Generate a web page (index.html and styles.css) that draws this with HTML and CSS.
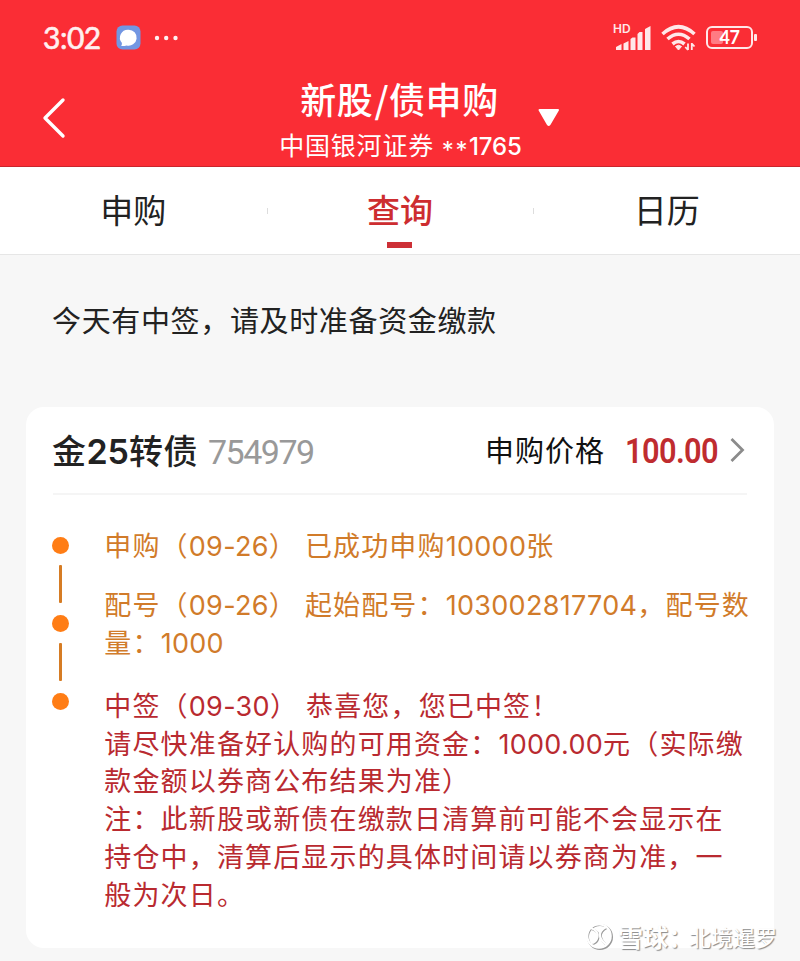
FILE: index.html
```
<!DOCTYPE html>
<html lang="zh-CN">
<head>
<meta charset="utf-8">
<title>新股/债申购</title>
<link rel="stylesheet" href="styles.css">
</head>
<body>
<header class="header">
  <div class="status">
    <div class="status-left">
      <span class="clock">3:02</span>
      <svg class="chat" viewBox="0 0 25 25"><rect x=".5" y=".5" width="24" height="24" rx="6" fill="#7296e2"/><path d="M12.5 4.7a8 8 0 1 1-2 15.7c-2 .7-3.600.6-5.300.5.8-1.100.8-2 .6-3.100A8 8 0 0 1 12.500 4.700z" fill="#fff"/></svg>
      <svg class="dots" viewBox="0 0 25 6"><g fill="#fff0f0"><circle cx="3" cy="3" r="2.200"/><circle cx="12.200" cy="3" r="2.200"/><circle cx="21.500" cy="3" r="2.200"/></g></svg>
    </div>
    <div class="status-right">
      <div class="signal"><span class="hd">HD</span>
        <svg viewBox="0 0 38 26"><g fill="#ffe8e9"><path d="M1 25v-3l5.500-3V25zM8.500 25v-6.500l5-2.500V25z"/><path d="M15.500 25V14l2-1.500h3V25z"/><path d="M22.500 25V9l2-2h3V25zM30 25V4l5.500-3v24z"/></g></svg>
      </div>
      <svg class="wifi" viewBox="0 0 36 28"><g fill="none" stroke="#ffe8e9" stroke-width="3.600"><path d="M1.500 10q16-14.500 32 0"/><path d="M6.500 15q11-9.500 22 0"/><path d="M11.500 20q6-5 12 0"/></g><path d="M14.500 22.500q3-2.500 6 0L17.500 26z" fill="#ffe8e9" stroke="#ffe8e9"/><path d="M27 26v-6.500M27 26l-2.700-3M30.800 26v-7M30.800 19.500l2.700 3" stroke="#ffe8e9" stroke-width="1.800" fill="none"/></svg>
      <div class="battery"><span class="level"></span><span class="pct">47</span></div>
    </div>
  </div>
  <div class="nav">
    <svg class="back" viewBox="0 0 24 42"><path d="M21 3 3 21l18 18" fill="none" stroke="#fff" stroke-width="3.400" stroke-linecap="round" stroke-linejoin="round"/></svg>
    <div class="heading">
      <h1>新股<i>/</i>债申购</h1>
      <p>中国银河证券 <span class="stars">**</span><span class="acct">1765</span></p>
    </div>
    <svg class="caret" viewBox="0 0 24 20"><path d="M2.500 2h18.500L12.500 16.500q-.8 1-1.600 0z" fill="#fff" stroke="#fff" stroke-width="2" stroke-linejoin="round"/></svg>
  </div>
</header>
<nav class="tabs">
  <div class="tab">申购</div>
  <div class="tab active">查询</div>
  <div class="tab">日历</div>
</nav>
<p class="notice">今天有中签，请及时准备资金缴款</p>
<section class="card">
  <div class="card-head">
    <span class="name">金<b>25</b>转债</span>
    <span class="code">754979</span>
    <span class="label">申购价格</span>
    <span class="price">100.00</span>
    <svg class="chev" viewBox="0 0 16 26"><path d="m2.500 2 11 11-11 11" fill="none" stroke="#8b8b8b" stroke-width="2.800"/></svg>
  </div>
  <div class="timeline">
    <div class="rail"><i class="dot"></i><i class="bar"></i><i class="dot"></i><i class="bar"></i><i class="dot"></i></div>
    <div class="events">
      <div class="event"><div>申购（<span class="num">09-26</span>）<span class="gap"></span>已成功申购<span class="num">10000</span>张</div></div>
      <div class="event"><div>配号（<span class="num">09-26</span>）<span class="gap"></span>起始配号：<span class="num">103002817704</span>，配号数</div><div>量：<span class="num">1000</span></div></div>
      <div class="event won"><div>中签（<span class="num">09-30</span>）<span class="gap"></span>恭喜您，您已中签！</div><div>请尽快准备好认购的可用资金：<span class="num">1000.00</span>元（实际缴</div><div>款金额以券商公布结果为准）</div><div>注：此新股或新债在缴款日清算前可能不会显示在</div><div>持仓中，清算后显示的具体时间请以券商为准，一</div><div>般为次日。</div></div>
    </div>
  </div>
</section>
<div class="watermark">
  <svg viewBox="0 0 28 28"><g fill="none" stroke="#999" stroke-width="2" transform="translate(1 1)"><circle cx="13" cy="13" r="12"/><path d="M5 5q8 3 6.500 9T5 20M20 4q-7 4-6 9t7 9"/></g><g fill="none" stroke="#fff" stroke-width="2.200"><circle cx="13" cy="13" r="11.700"/><path d="M5 5q8 3 6.500 9T5 20M20 4q-7 4-6 9t7 9"/></g></svg>
  <span class="brand">雪球：</span><span class="user">北境暹罗</span>
</div>
</body>
</html>
```

FILE: styles.css
```
* { box-sizing: border-box; margin: 0; padding: 0; }
body { width: 800px; height: 961px; overflow: hidden; background: #f7f7f7; font-family: Inter, "Noto Sans CJK SC", sans-serif; position: relative; text-spacing-trim: space-all; white-space: nowrap; }
svg { display: block; flex: none; }
i { font-style: normal; }

.header { height: 167px; background: #fa2d35; border-bottom: 1px solid #c9252c; color: #fff; }
.status { height: 75px; display: flex; justify-content: space-between; padding: 0 47px 0 43px; }
.status-left, .status-right { display: flex; align-items: center; }
.clock { width: 73px; font-family: Lato, sans-serif; font-size: 30px; letter-spacing: -.5px; color: #fff0f0; -webkit-text-stroke: .6px #fff0f0; line-height: 32px; margin-top: -2px; }
.chat { width: 25px; height: 25px; }
.dots { width: 25px; height: 6px; margin-left: 13px; }
.signal { position: relative; width: 38px; height: 26px; margin-right: 8px; }
.signal svg { width: 38px; height: 26px; }
.hd { position: absolute; left: -2px; top: -2px; font-size: 12px; line-height: 12px; font-weight: 600; color: #ffe8e9; }
.wifi { width: 36px; height: 28px; margin-right: 9px; }
.battery { position: relative; width: 47px; height: 23px; border: 2px solid #ffe8e9; border-radius: 6px; display: flex; align-items: center; justify-content: center; }
.battery::after { content: ""; position: absolute; right: -6px; top: 6px; width: 3px; height: 7px; border-radius: 1px; background: #ffe8e9; }
.level { position: absolute; left: 3px; top: 3px; width: 12px; height: 13px; background: #ff7b83; border-radius: 2px; }
.pct { position: relative; font-family: Lato, sans-serif; font-size: 18px; line-height: 19px; font-weight: 700; letter-spacing: -.5px; }

.nav { height: 91px; display: flex; align-items: flex-start; }
.back { width: 24px; height: 42px; margin: 22px 0 0 42px; }
.heading { width: 270px; margin-left: 200px; text-align: center; }
h1 { font-size: 36px; font-weight: 500; line-height: 48px; letter-spacing: .6px; font-family: "Noto Sans CJK SC", sans-serif; width: 267px; margin-top: -1px; }
h1 i { margin: 0 0 0 1px; }
.heading p { font-size: 25px; line-height: 38px; height: 38px; margin-top: 5px; letter-spacing: .8px; width: 271px; margin-left: -1px; }
.stars { letter-spacing: 1.500px; font-size: 24px; position: relative; top: 4px; }
.acct { font-size: 24px; letter-spacing: -.1px; font-weight: 500; }
.caret { width: 24px; height: 20px; margin: 33px 0 0 1px; }

.tabs { height: 88px; background: #fff; border-bottom: 1px solid #e6e6e6; display: grid; grid-template-columns: repeat(3, 1fr); }
.tab { position: relative; height: 87px; text-align: center; font-size: 33px; line-height: 89px; color: #222; }
.tab + .tab::before { content: ""; position: absolute; left: 0; top: 41px; width: 1px; height: 6px; background: #ddd; }
.active { color: #cd2d30; font-weight: 500; }
.active::after { content: ""; position: absolute; left: 120px; top: 75px; width: 25px; height: 6px; background: #cd3036; }

.notice { height: 152px; padding: 45px 0 0 52px; font-size: 29px; line-height: 44px; letter-spacing: .65px; color: #222; }

.card { margin: 0 26px; height: 541px; background: #fff; border-radius: 18px; padding: 0 27px; }
.card-head { height: 88px; border-bottom: 2px solid #f5f5f5; display: flex; align-items: center; }
.card-head > * { flex: none; }
.name { width: 156px; font-size: 34px; font-weight: 500; color: #222; letter-spacing: .4px; margin: -2px 0 0 -1px; }
.name b { font-weight: 600; font-size: 34px; letter-spacing: 0; }
.code { font: 400 34px/44px Roboto, sans-serif; letter-spacing: -1.500px; color: #999; width: 277px; padding-top: 3px; }
.label { font-size: 29px; letter-spacing: 1px; color: #111; width: 140px; margin-top: -2px; }
.price { font: 600 35px/44px Roboto, sans-serif; letter-spacing: -.7px; color: #bf2c2f; width: 104px; padding-top: 4px; transform: scaleX(.88); transform-origin: 0 50%; }
.chev { width: 16px; height: 26px; }

.timeline { display: flex; padding-top: 33px; }
.rail { flex: none; width: 52px; padding-top: 9px; }
.rail i { display: block; }
.dot { width: 17px; height: 17px; margin-left: -1px; border-radius: 50%; background: #ff7d15; }
.bar { width: 3px; height: 38px; margin: 11px 0 12px 5.500px; background: #d67c24; border-radius: 1px; }
.events { color: #d17b2a; font-size: 27px; line-height: 37.800px; letter-spacing: 1.150px; padding-top: .4px; margin-left: -.7px; }
.event { margin-bottom: 21px; }
.event div { height: 37.800px; }
.event + .event { margin-bottom: 25px; }
.num { letter-spacing: .3px; }
.gap { display: inline-block; width: 8px; }
.won { color: #b92a30; }

.watermark { position: absolute; left: 586px; top: 921px; display: flex; align-items: center; height: 32px; color: #fff; text-shadow: 1px 1px 1px #888; font-family: "Noto Sans CJK SC", sans-serif; }
.watermark svg { width: 28px; height: 28px; }
.brand { font-size: 25px; line-height: 30px; font-weight: 700; width: 71px; margin: -3px 0 0 4px; }
.user { font-size: 22px; line-height: 30px; margin-top: -3px; }
```
